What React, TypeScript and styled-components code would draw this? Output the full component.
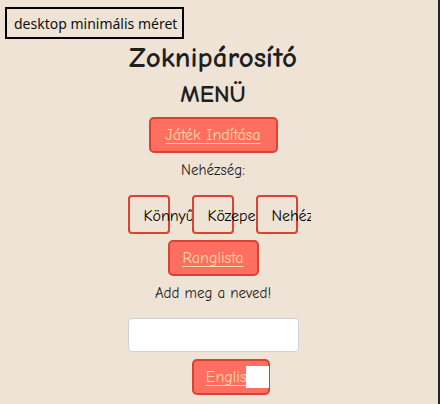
import React from 'react';
import styled, { createGlobalStyle } from 'styled-components';

const comic = `'Comic Sans MS', 'Comic Neue', 'DejaVu Sans', sans-serif`;

const GlobalStyle = createGlobalStyle`
  html, body {
    margin: 0;
    padding: 0;
    background: #efe3d6;
  }
`;

const Frame = styled.div`
  position: relative;
  box-sizing: border-box;
  width: 440px;
  min-height: 100vh;
  background: #efe3d6;
  border-right: 2px solid #262626;
  overflow: hidden;
`;

const SizeTag = styled.div`
  position: absolute;
  left: 5px;
  top: 7px;
  box-sizing: border-box;
  width: 179px;
  height: 32px;
  border: 2px solid #000;
  padding-left: 7px;
  display: flex;
  align-items: center;
  font-family: 'Noto Sans', 'Open Sans', sans-serif;
  font-size: 14px;
  color: #111;
`;

const Column = styled.main`
  width: 426px;
  display: flex;
  flex-direction: column;
  align-items: center;
  padding-top: 39px;
  font-family: ${comic};
  color: #1f1f1f;
`;

const Title = styled.h1`
  margin: 0;
  font-size: 29px;
  line-height: 37px;
  font-weight: 600;
`;

const Subtitle = styled.h2`
  margin: 3px 0 0;
  font-size: 24px;
  line-height: 30px;
  font-weight: 600;
`;

const Button = styled.button<{ $width: number; $top: number; $shift?: number }>`
  position: relative;
  box-sizing: border-box;
  margin-top: ${({ $top }) => $top}px;
  margin-left: ${({ $shift }) => $shift ?? 0}px;
  width: ${({ $width }) => $width}px;
  height: 36px;
  background: #ff6f61;
  border: 2px solid #da4331;
  border-radius: 5px;
  color: #ffd9a3;
  font-family: ${comic};
  font-size: 16px;
  text-decoration: underline;
  text-underline-offset: 3px;
  padding: 0;
  cursor: pointer;
`;

const Label = styled.p<{ $top: number }>`
  margin: ${({ $top }) => $top}px 0 0;
  font-size: 15px;
  line-height: 20px;
  font-weight: 500;
`;

const DiffRow = styled.div`
  margin-top: 15px;
  width: 183px;
  padding-left: 12px;
  display: flex;
  gap: 22px;
  overflow: hidden;
`;

const DiffButton = styled.button`
  box-sizing: border-box;
  flex: none;
  width: 42px;
  height: 39px;
  background: #efe3d6;
  border: 2px solid #da4331;
  border-radius: 4px;
  padding: 3px 0 0 14px;
  text-align: left;
  white-space: nowrap;
  font-family: ${comic};
  font-size: 16px;
  font-weight: 500;
  color: #000;
  overflow: visible;
`;

const NameInput = styled.input`
  box-sizing: border-box;
  margin-top: 15px;
  width: 171px;
  height: 34px;
  border: 1px solid #cfd2d8;
  border-radius: 4px;
  background: #fff;
`;

const Patch = styled.span`
  position: absolute;
  right: -1px;
  top: 5px;
  width: 23px;
  height: 22px;
  background: #fff;
`;

export default function App() {
  return (
    <Frame>
      <GlobalStyle />
      <SizeTag>desktop minimális méret</SizeTag>
      <Column>
        <Title>Zoknipárosító</Title>
        <Subtitle>MENÜ</Subtitle>
        <Button $width={129} $top={8}>Játék Indítása</Button>
        <Label $top={7}>Nehézség:</Label>
        <DiffRow>
          <DiffButton>Könnyű</DiffButton>
          <DiffButton>Közepes</DiffButton>
          <DiffButton>Nehéz</DiffButton>
        </DiffRow>
        <Button $width={91} $top={6}>Ranglista</Button>
        <Label $top={7}>Add meg a neved!</Label>
        <NameInput />
        <Button $width={78} $top={7} $shift={35}>
          English
          <Patch />
        </Button>
      </Column>
    </Frame>
  );
}
